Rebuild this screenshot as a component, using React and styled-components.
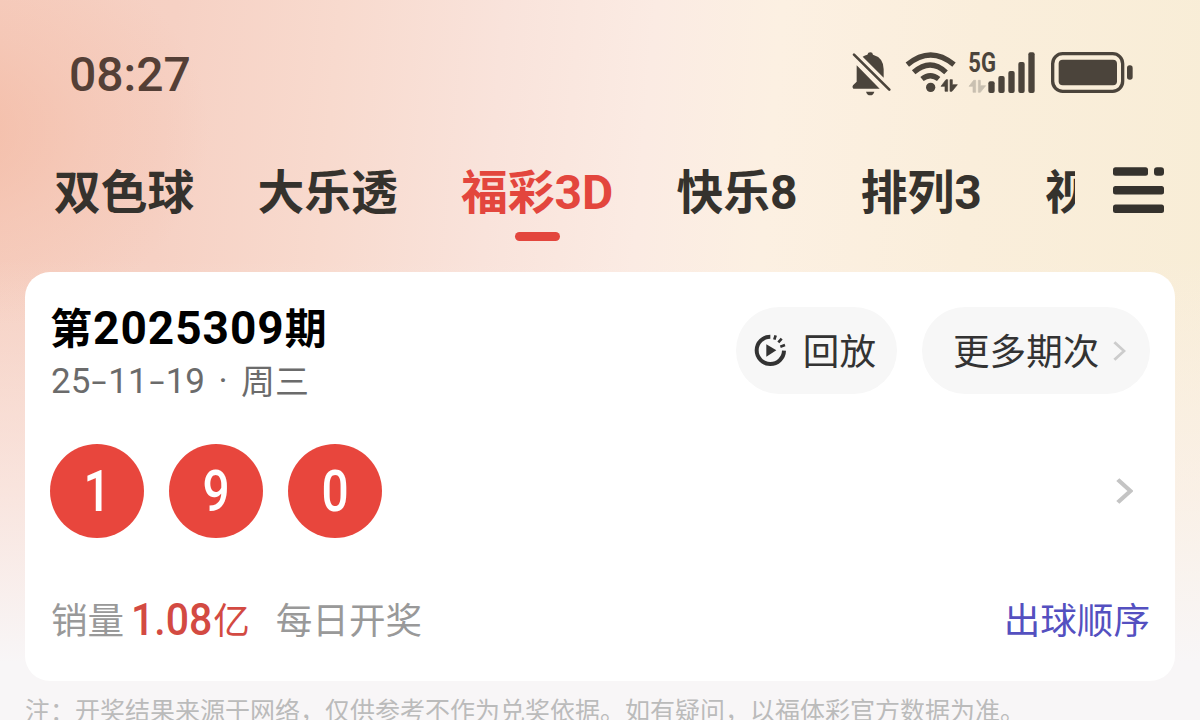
import React, { useState } from 'react';
import styled, { createGlobalStyle } from 'styled-components';

const GlobalStyle = createGlobalStyle`
*{
  box-sizing:border-box;
}
body{
  margin:0;
  overflow:hidden;
  font-family:Roboto, 'Noto Sans CJK SC', sans-serif;
}
`

const Page = styled.div`
width:1200px;
height:720px;
overflow:hidden;
display:flex;
flex-direction:column;
background:
  linear-gradient(to bottom, rgba(248,246,247,0) 36%, rgba(251,242,240,.6) 68%, #f8f6f7 92%),
  radial-gradient(ellipse 260px 200px at -50px 130px, rgba(243,182,158,.7), rgba(243,182,158,.3) 50%, rgba(243,182,158,0)),
  linear-gradient(95deg, #f6cfc1 0%, #f6d1c4 14%, #f8dace 27%, #f9e3db 40%, #fbebe3 52%, #fcf0e2 62%, #faeedb 78%, #f8edd6 100%);
`

const StatusBar = styled.header`
flex:none;
height:147px;
padding:50px 66px 0 69px;
display:flex;
justify-content:space-between;
align-items:flex-start;
color:#4b443b;
`

const Clock = styled.span`
font-size:48px;
font-weight:500;
line-height:50px;
color:#543f36;
`

const StatusIcons = styled.div`
display:flex;
height:46px;
`

const StatusIcon = styled.svg`
display:block;
overflow:visible;
width:${props => props.$width}px;
height:46px;
margin-left:${props => props.$gap || 0}px;
`

const TabBar = styled.nav`
flex:none;
height:125px;
padding:0 36px 0 54px;
display:flex;
justify-content:space-between;
`

const TabStrip = styled.div`
width:1021px;
display:flex;
gap:63.1px;
overflow:hidden;
`

const Tab = styled.button`
flex:none;
display:flex;
flex-direction:column;
align-items:center;
padding:14px 0 0;
border:none;
background:transparent;
font-family:inherit;
font-size:46.8px;
font-weight:700;
line-height:64px;
color:${props => props.$active ? '#e3463d' : '#35322d'};

&::after{
  content:'';
  width:45px;
  height:9px;
  margin-top:7px;
  border-radius:5px;
  background:${props => props.$active ? '#e3463d' : 'transparent'};
}
`

const TabDigits = styled.span`
font-size:48px;
line-height:0;
`

const MenuIcon = styled.svg`
width:51px;
height:46px;
margin-top:20px;
`

const Card = styled.section`
flex:none;
height:409px;
margin:0 25px;
padding:35px 25px 0 26px;
border-radius:25px;
background:#fff;
display:flex;
flex-direction:column;
`

const CardHead = styled.div`
height:87px;
display:flex;
justify-content:space-between;
`

const Issue = styled.h1`
margin:-6px 0 0 -1px;
font-size:42px;
font-weight:700;
line-height:54px;
color:#000;
`

const IssueNumber = styled.span`
font-size:46px;
letter-spacing:1px;
margin-left:1px;
`

const DateLine = styled.p`
margin:3px 0 0;
display:flex;
align-items:center;
font-size:35px;
font-weight:400;
line-height:44px;
color:#6b6b6b;
`

const Dash = styled.span`
display:inline-block;
width:18px;
text-align:center;
transform:scaleX(1.55);
`

const Weekday = styled.span`
font-size:34px;
`

const Dot = styled.span`
width:36px;
text-align:center;
`

const Actions = styled.div`
display:flex;
gap:25px;
`

const Pill = styled.button`
height:87px;
width:${props => props.$width}px;
padding:0 ${props => props.$right}px 0 ${props => props.$left}px;
display:flex;
align-items:center;
justify-content:space-between;
border:none;
border-radius:44px;
background:#f7f7f7;
font-family:inherit;
font-size:36.6px;
line-height:50px;
color:#333;
`

const PillLabel = styled.span`
padding-top:4px;
`

const BallRow = styled.div`
height:94px;
margin:50px 17px 0 -1px;
display:flex;
align-items:center;
justify-content:space-between;
`

const Balls = styled.div`
display:flex;
gap:25px;
`

const Ball = styled.div`
width:94px;
height:94px;
border-radius:50%;
background:#e8463d;
color:#fff;
display:flex;
align-items:center;
justify-content:center;
font-size:57px;
font-weight:500;

span{
  transform:scaleX(.84);
}
`

const CardFoot = styled.div`
margin-top:57px;
height:54px;
display:flex;
align-items:center;
justify-content:space-between;
font-size:36.6px;
line-height:54px;
`

const Sales = styled.div`
display:flex;
align-items:center;
color:#999;
`

const Amount = styled.span`
display:flex;
align-items:center;
margin:0 26px 0 7px;
color:#d34a42;
`

const AmountNumber = styled.span`
width:82px;
font-size:45px;
font-weight:500;
transform:translateY(-2px) scaleX(.91);
transform-origin:left;
`

const OrderLink = styled.a`
color:#5450c0;
`

const Note = styled.p`
margin:11px 0 0 25px;
white-space:nowrap;
font-size:25px;
line-height:40px;
color:#bbb;
`

const tabs = [
    { name: '双色球' },
    { name: '大乐透' },
    { name: '福彩', digits: '3D' },
    { name: '快乐', digits: '8' },
    { name: '排列', digits: '3' },
    { name: '视频' },
];

const BellOff = () => (
    <StatusIcon $width={42} viewBox="30 30 126 138">
        <path d="M50 76 L119 146 H40 Q35 141 39 136 L50 125 Z" fill="currentColor"/>
        <path d="M68 50 Q75 45 82 44 Q84 37 91 37 Q98 37 99 44 Q131 53 131 88 V113 Z" fill="currentColor"/>
        <path d="M42 44 L148 149" stroke="currentColor" strokeWidth="8" strokeLinecap="round"/>
        <path d="M78 155 H103 Q100 166 91 166 Q81 166 78 155Z" fill="currentColor"/>
    </StatusIcon>
)

const Wifi = () => (
    <StatusIcon $width={54} $gap={12} viewBox="192 30 162 138">
        <g fill="none" stroke="currentColor" strokeWidth="16">
            <path d="M202 74 Q272 16 342 74"/>
            <path d="M221 97 Q271 53 318 97"/>
            <path d="M246 117 Q271 97 296 117"/>
        </g>
        <circle cx="272" cy="142" r="14" fill="currentColor"/>
        <path d="M303 139 L318 119 H323 V154 H315 V139Z M330 119 H337 V134 H352 L336 154 H330Z" fill="currentColor" stroke="currentColor" strokeWidth="2"/>
    </StatusIcon>
)

const Signal = () => (
    <StatusIcon $width={68} $gap={10} viewBox="384 30 204 138">
        <text x="385" y="96" fontFamily="Roboto, sans-serif" fontSize="82" fontWeight="700" textLength="83" lengthAdjust="spacingAndGlyphs" fill="currentColor">5G</text>
        <path d="M387 139 L401 121 H407 V157 H399 V139Z M415 121 H421 V137 H437 L421 157 H415Z" fill="#c9c0b1" stroke="#c9c0b1" strokeWidth="2"/>
        <g fill="currentColor">
            <rect x="445" y="124" width="19" height="35" rx="6"/>
            <rect x="475" y="108" width="19" height="51" rx="6"/>
            <rect x="505" y="93" width="19" height="66" rx="6"/>
            <rect x="535" y="66" width="19" height="93" rx="6"/>
            <rect x="565" y="37" width="19" height="122" rx="6"/>
        </g>
    </StatusIcon>
)

const Battery = () => (
    <StatusIcon $width={84} $gap={14} viewBox="630 30 252 138">
        <rect x="638" y="41" width="210" height="113" rx="30" fill="none" stroke="currentColor" strokeWidth="10"/>
        <rect x="656" y="59" width="175" height="77" rx="12" fill="currentColor"/>
        <rect x="861" y="76" width="17" height="43" rx="8" fill="currentColor"/>
    </StatusIcon>
)

const Replay = () => (
    <svg width="33" height="33" viewBox="0 0 99 99">
        <path d="M49 8 A41 41 0 1 0 90 50" fill="none" stroke="#333" strokeWidth="12"/>
        <path d="M61 17 L65 4 M73 25 L83 14 M79 38 L93 33" stroke="#333" strokeWidth="8"/>
        <path d="M37 31 L67 49 L37 68Z" fill="#333"/>
    </svg>
)

const Chevron = ({ width, height, stroke, color }) => (
    <svg width={width} height={height} viewBox="0 0 14 24" preserveAspectRatio="none">
        <path d="M1.5 1.5 L12 12 L1.5 22.5" fill="none" stroke={color} strokeWidth={stroke}/>
    </svg>
)

const App = () => {
    const [active, setActive] = useState(2);

    return (
        <Page>
            <GlobalStyle/>
            <StatusBar>
                <Clock>08:27</Clock>
                <StatusIcons>
                    <BellOff/>
                    <Wifi/>
                    <Signal/>
                    <Battery/>
                </StatusIcons>
            </StatusBar>
            <TabBar>
                <TabStrip>
                    {tabs.map((tab, i) => (
                        <Tab key={i} $active={i === active} onClick={() => setActive(i)}>
                            <span>{tab.name}{tab.digits && <TabDigits>{tab.digits}</TabDigits>}</span>
                        </Tab>
                    ))}
                </TabStrip>
                <MenuIcon viewBox="0 0 51 46" fill="#35322d">
                    <rect x="0" y="0.3" width="35" height="8.4" rx="2.5"/>
                    <rect x="41" y="0.3" width="10" height="8.4" rx="3"/>
                    <rect x="0" y="19" width="51" height="8.4" rx="2.5"/>
                    <rect x="0" y="37.6" width="51" height="8.4" rx="2.5"/>
                </MenuIcon>
            </TabBar>
            <Card>
                <CardHead>
                    <div>
                        <Issue>第<IssueNumber>2025309</IssueNumber>期</Issue>
                        <DateLine>
                            25<Dash>-</Dash>11<Dash>-</Dash>19<Dot>·</Dot><Weekday>周三</Weekday>
                        </DateLine>
                    </div>
                    <Actions>
                        <Pill $width={161} $left={18} $right={21}>
                            <Replay/>
                            <PillLabel>回放</PillLabel>
                        </Pill>
                        <Pill $width={228} $left={31} $right={24}>
                            <PillLabel>更多期次</PillLabel>
                            <Chevron width={13} height={20} stroke={3} color="#ccc"/>
                        </Pill>
                    </Actions>
                </CardHead>
                <BallRow>
                    <Balls>
                        {[1, 9, 0].map(n => <Ball key={n}><span>{n}</span></Ball>)}
                    </Balls>
                    <Chevron width={17} height={26} stroke={3.6} color="#c4c4c4"/>
                </BallRow>
                <CardFoot>
                    <Sales>
                        销量
                        <Amount><AmountNumber>1.08</AmountNumber>亿</Amount>
                        每日开奖
                    </Sales>
                    <OrderLink>出球顺序</OrderLink>
                </CardFoot>
            </Card>
            <Note>注：开奖结果来源于网络，仅供参考不作为兑奖依据。如有疑问，以福体彩官方数据为准。</Note>
        </Page>
    );
}

export default App;
